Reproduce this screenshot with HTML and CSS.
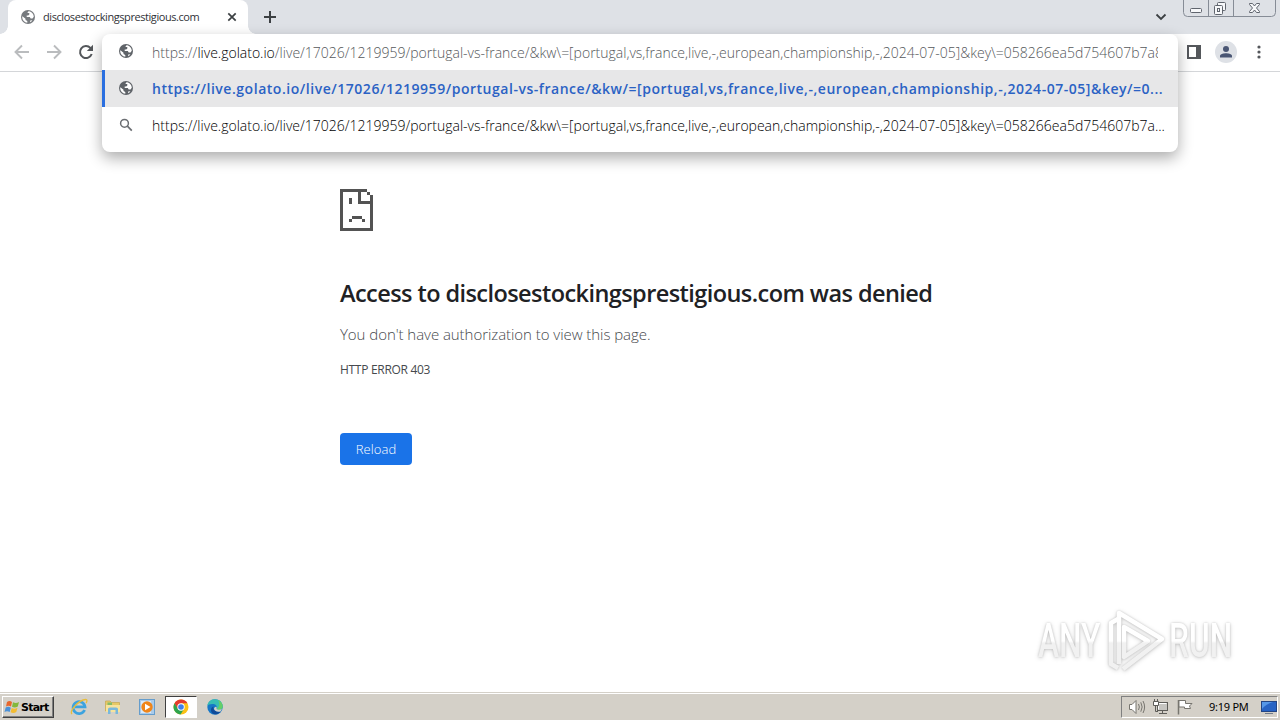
FILE: index.html
```html
<!DOCTYPE html>
<html lang="en">
<head>
    <meta charset="UTF-8">
    <title>disclosestockingsprestigious.com</title>
    <link rel="stylesheet" href="styles.css">
</head>
<body>
    <!-- shared icons -->
    <svg class="defs" width="0" height="0">
        <symbol id="globe" viewBox="0 0 16 16">
            <circle cx="8" cy="8" r="7" fill="#5f6368"/>
            <path d="M2.4 7.2L5.5 9.8V11L7.3 12V13.8C4.5 13.5 2.2 11 2.2 8ZM9.3 2.3C11.8 2.9 13.7 5.1 13.8 7.7L12.5 9.4H10.7L9.8 8.1H6.7V6.5H8.2L9.3 5.4V4.1H7.3L8.5 2.2ZM10.2 11.4L12.4 11.2C11.8 12.1 11 12.8 10.1 13.2Z" fill="#fff"/>
        </symbol>
    </svg>

    <header class="tab-strip">
        <div class="tab">
            <svg class="tab-icon" width="16" height="16"><use href="#globe"/></svg>
            <span class="tab-title">disclosestockingsprestigious.com</span>
            <svg class="tab-close" width="10" height="10" viewBox="0 0 10 10"><path d="M1.3 1.3L8.7 8.7M8.7 1.3L1.3 8.7" stroke="#3c4043" stroke-width="1.7"/></svg>
        </div>
        <svg class="new-tab" width="14" height="14" viewBox="0 0 14 14"><path d="M7 1V13M1 7H13" stroke="#3c4043" stroke-width="2"/></svg>
        <svg class="tab-search" width="12" height="8" viewBox="0 0 12 8"><path d="M1.5 1.5L6 6L10.5 1.5" fill="none" stroke="#3c4043" stroke-width="1.8"/></svg>
        <svg class="window-buttons" width="94" height="17" viewBox="0 0 94 17">
            <path d="M.5 0V12.5Q.5 16.500 4.500 16.500H88.500Q92.500 16.500 92.500 12.500V0M25.500 0V16M50.500 0V16" fill="none" stroke="#868c96"/>
            <g fill="#f7f8fa" stroke="#60656e">
                <rect x="7.500" y="8.500" width="11" height="4" rx="1"/>
                <rect x="34.500" y="2.500" width="8" height="8" rx="1"/>
                <rect x="31.500" y="5.500" width="8" height="9" rx="1"/>
                <rect x="34.500" y="8.500" width="2" height="3"/>
                <path d="M66.500 3.500H69.500L71.500 6L73.500 3.500H76.500V4.500L73.500 8L76.500 11.500V12.500H73.500L71.500 10L69.500 12.500H66.500V11.500L69.500 8L66.500 4.500Z"/>
            </g>
        </svg>
    </header>

    <nav class="toolbar">
        <svg width="16" height="16" viewBox="0 0 16 16"><path d="M15 8H2M8 1.500L1.500 8L8 14.500" fill="none" stroke="#babcbe" stroke-width="1.900"/></svg>
        <svg width="16" height="16" viewBox="0 0 16 16"><path d="M1 8H14M8 1.500L14.500 8L8 14.500" fill="none" stroke="#babcbe" stroke-width="1.900"/></svg>
        <svg width="16" height="16" viewBox="0 0 16 16"><path d="M13.700 10A6 6 0 1 1 12.400 3.900L14 5.500" fill="none" stroke="#54575b" stroke-width="2"/><path d="M15 .8V7H8.800Z" fill="#54575b"/></svg>
        <div class="toolbar-right">
            <svg width="14" height="14" viewBox="0 0 14 14"><path fill-rule="evenodd" d="M0 0H14V14H0ZM2 2V12H9V2Z" fill="#54575b"/></svg>
            <svg width="22" height="22" viewBox="0 0 22 22"><circle cx="11" cy="11" r="11" fill="#dee1e6"/><circle cx="11" cy="8" r="3" fill="#4a5674"/><path d="M5 16.500V15C5 13 8.500 12.200 11 12.200S17 13 17 15V16.500Z" fill="#4a5674"/></svg>
            <svg width="4" height="14" viewBox="0 0 4 14"><g fill="#54575b"><circle cx="2" cy="2" r="1.600"/><circle cx="2" cy="7" r="1.600"/><circle cx="2" cy="12" r="1.600"/></g></svg>
        </div>
    </nav>

    <div class="omnibox">
        <div class="row input">
            <svg width="16" height="16"><use href="#globe"/></svg>
            <span class="url">https://<b>live.golato.io</b>/live/17026/1219959/portugal-vs-france/&amp;kw\=[portugal,vs,france,live,-,european,championship,-,2024-07-05]&amp;key\=058266ea5d754607b7a8</span>
        </div>
        <div class="row selected">
            <svg width="16" height="16"><use href="#globe"/></svg>
            <span class="url">https://live.golato.io/live/17026/1219959/portugal-vs-france/&amp;kw/=[portugal,vs,france,live,-,european,championship,-,2024-07-05]&amp;key/=0...</span>
        </div>
        <div class="row search">
            <svg width="16" height="16" viewBox="0 0 16 16"><circle cx="6.500" cy="6.300" r="3.900" fill="none" stroke="#6b6e72" stroke-width="1.500"/><path d="M9.400 9.200L13.800 13.600" stroke="#6b6e72" stroke-width="1.700"/></svg>
            <span class="url">https://live.golato.io/live/17026/1219959/portugal-vs-france/&amp;kw\=[portugal,vs,france,live,-,european,championship,-,2024-07-05]&amp;key\=058266ea5d754607b7a...</span>
        </div>
    </div>

    <main class="error-page">
        <svg width="33" height="42" viewBox="0 0 33 42" shape-rendering="crispEdges"><path fill="#535353" fill-rule="evenodd" d="M0 0H27V3H30V6H33V42H0ZM3 3V39H30V15H18V3ZM21 3V12H30V9H30V6H27V3ZM9 9H12V15H9ZM12 27H22V30H12ZM9 30H12V33H9ZM22 30H25V33H22Z"/></svg>
        <h1>Access to disclosestockingsprestigious.com was denied</h1>
        <p class="message">You don't have authorization to view this page.</p>
        <p class="code">HTTP ERROR 403</p>
        <button class="reload">Reload</button>
    </main>

    <div class="watermark">
        <span class="any">ANY</span>
        <svg width="60" height="68" viewBox="0 0 60 68">
            <g fill="none" stroke="url(#fade)" stroke-width="4.500" stroke-linejoin="round">
                <path d="M12 12L5 16V57L12 61"/>
                <path d="M13 57V6L56 32L17 62"/>
                <path d="M18 20L42 34L18 50Z"/>
            </g>
            <linearGradient id="fade" gradientUnits="userSpaceOnUse" x1="0" y1="0" x2="0" y2="68">
                <stop offset=".5" stop-color="#fff"/>
                <stop offset=".53" stop-color="#f1f1f1"/>
            </linearGradient>
        </svg>
        <span class="run">RUN</span>
    </div>

    <footer class="taskbar">
        <div class="start">
            <svg width="16" height="16" viewBox="0 0 16 16">
                <path d="M3 3Q5.500 1 8 3L7 7.500Q4.500 6 2 7.500Z" fill="#e8672c"/>
                <path d="M9 3.300Q12 5 15 3L13.800 7.500Q11 9.300 8 7.800Z" fill="#83b83c"/>
                <path d="M1.700 8.600Q4.300 7 6.800 8.700L5.700 13Q3 11.500 .5 13Z" fill="#4b91d8"/>
                <path d="M7.700 9Q10.500 10.500 13.500 8.700L12.300 13Q9.500 15 6.600 13.300Z" fill="#f3bc32"/>
            </svg>
            <span>Start</span>
        </div>
        <div class="apps">
            <div class="app">
                <svg width="18" height="18" viewBox="0 0 18 18">
                    <path d="M14.600 12A6 6 0 1 1 15 8.800H5" fill="none" stroke="#3ca3df" stroke-width="2.700"/>
                    <path d="M2 16C-1 13 9 2 15.500 1.500C18 1.500 16.500 4.500 16 5" fill="none" stroke="#e8bd3a" stroke-width="1.300"/>
                </svg>
            </div>
            <div class="app">
                <svg width="18" height="18" viewBox="0 0 18 18">
                    <path d="M1.500 3H6L7.500 4.500H15.500V13H1.500Z" fill="#e7c966" stroke="#c6a650" stroke-width=".7"/>
                    <path d="M3.500 4.500H8V7H3.500Z" fill="#83bb68"/>
                    <path d="M2 7H16V14H2Z" fill="#f7e39c"/>
                    <path d="M4 16V11Q4 9.500 6 9.500H12Q14 9.500 14 11V16H11.500V12H6.500V16Z" fill="#79b8dc"/>
                </svg>
            </div>
            <div class="app">
                <svg width="18" height="18" viewBox="0 0 18 18">
                    <rect x="1.500" y="1.500" width="15" height="15" fill="#a9cbea" stroke="#659dcc"/>
                    <rect x="3" y="3" width="10" height="12" fill="#d8eafa"/>
                    <circle cx="9" cy="9" r="5.700" fill="#ef8519"/>
                    <path d="M7 5.700V12.300L12.500 9Z" fill="#fff"/>
                </svg>
            </div>
            <div class="app active">
                <svg width="16" height="16" viewBox="0 0 16 16">
                    <circle cx="8" cy="8" r="7.500" fill="#fbc116"/>
                    <path d="M8 8L4.500 10L1.500 4.200A7.500 7.500 0 0 1 14.500 4.200H8Z" fill="#e33b2e"/>
                    <path d="M1.500 4.200A7.500 7.500 0 0 0 7.500 15.500L11 10L8 8L5 10Z" fill="#2da44e"/>
                    <circle cx="8" cy="8" r="3.700" fill="#fff"/>
                    <circle cx="8" cy="8" r="2.800" fill="#3e7fea"/>
                </svg>
            </div>
            <div class="app">
                <svg width="18" height="18" viewBox="0 0 18 18">
                    <circle cx="9" cy="9" r="7.700" fill="#1677c7"/>
                    <path d="M1.300 8C2 3 5.500 1.300 9 1.300C14 1.300 17 5 16.700 8.700C16.300 12 12 12.500 10.500 11C12 9.500 10.500 6.500 7.500 6C4.500 5.700 2 6.500 1.300 8Z" fill="#37bdb4"/>
                    <path d="M12 2C15 3.500 17 6 16.700 8.700C16.300 12 12 12.500 10.500 11C13 10 14.500 6 12 2Z" fill="#65cf68"/>
                    <path d="M7.500 8.500C6.500 12 10 14.500 14.700 13.500C12 17.500 5 17.500 5 12C5 10 6 9 7.500 8.500Z" fill="#104b99"/>
                    <path d="M10.500 11Q12.500 12.600 16 11L14.500 13.600C11 14.500 8 12.700 8 10.500Q8.500 8.500 10.300 8.700Q11.200 10 10.500 11Z" fill="#d4d0c8"/>
                </svg>
            </div>
        </div>
        <div class="tray">
            <svg width="18" height="16" viewBox="0 0 18 16"><path d="M1.500 5.500H4L8 1.500V14.500L4 10.500H1.500Z" fill="#fff" stroke="#77756f"/><path d="M10.500 5Q12.200 8 10.500 11M12.800 3.300Q15.500 8 12.800 12.700M15 2Q18.200 8 15 14" fill="none" stroke="#77756f"/></svg>
            <svg width="18" height="16" viewBox="0 0 18 16"><rect x="5.500" y="3.500" width="10" height="8" fill="#c6c5c1" stroke="#5e5d59"/><path d="M6.500 10.500V4.500H14.500" fill="none" stroke="#fff"/><path d="M7 14.500H15M10.500 12V14M3.500 6V12.500H6" fill="none" stroke="#5e5d59"/><path d="M1.500 2.500H6.500V6.500H1.500ZM2.500 0V2M5.500 0V2" fill="#fff" stroke="#5e5d59"/></svg>
            <svg width="18" height="16" viewBox="0 0 18 16"><path d="M2.500 1V15.500" stroke="#77756f" stroke-width="1.500"/><path d="M3 1.500H9.500V4.500H16L13.500 7L14.500 9.500H8.500V8H3Z" fill="#fff" stroke="#77756f"/></svg>
            <span class="clock">9:19 PM</span>
            <svg class="desktop" width="16" height="16" viewBox="0 0 16 16"><rect x=".5" y="2.500" width="15" height="10" fill="#2763c4" stroke="#234584"/><path d="M1 3H12Q5 5 1 10Z" fill="#5597e8"/><path d="M4 14.500H12" stroke="#717b8a"/></svg>
        </div>
    </footer>
</body>
</html>
```
FILE: styles.css
```css
* {
    box-sizing: border-box;
}
body {
    margin: 0;
    width: 1280px;
    height: 720px;
    overflow: hidden;
    display: flex;
    flex-direction: column;
    position: relative;
    background: #fff;
    font-family: "Open Sans", "Noto Sans", sans-serif;
}
svg {
    display: block;
    flex: none;
}
.defs {
    position: absolute;
}
.tab-strip {
    height: 34px;
    flex: none;
    display: flex;
    align-items: center;
    background: #dee1e6;
    padding-left: 8px;
}
.tab {
    position: relative;
    width: 240px;
    height: 34px;
    display: flex;
    align-items: center;
    padding: 0 11px 0 12px;
    background: #fff;
    border-radius: 8px 8px 0 0;
}
.tab::before,
.tab::after {
    content: "";
    position: absolute;
    bottom: 0;
    width: 8px;
    height: 8px;
}
.tab::before {
    left: -8px;
    background: radial-gradient(circle at 0 0, #dee1e6 7.5px, #fff 8px);
}
.tab::after {
    right: -8px;
    background: radial-gradient(circle at 100% 0, #dee1e6 7.5px, #fff 8px);
}
.tab-icon {
    opacity: 0.85;
}
.tab-title {
    margin: -2px 0 0 7px;
    flex: 1;
    font-size: 11px;
    letter-spacing: -0.43px;
    white-space: nowrap;
    color: #303236;
}
.new-tab {
    margin-left: 15px;
}
.tab-search {
    margin-left: auto;
}
.window-buttons {
    margin: 0 3px 0 16px;
    align-self: flex-start;
}
.toolbar {
    height: 38px;
    flex: none;
    display: flex;
    align-items: center;
    gap: 16px;
    padding: 0 20px 2px 14px;
    border-bottom: 1px solid #d4d6d9;
}
.toolbar-right {
    margin-left: auto;
    margin-right: -1px;
    display: flex;
    align-items: center;
    gap: 14px;
}
.toolbar-right svg:last-child {
    margin-left: 6px;
}
.omnibox {
    position: absolute;
    left: 102px;
    top: 34px;
    width: 1076px;
    height: 118px;
    overflow: hidden;
    border-radius: 8px;
    background: #fff;
    box-shadow: 0 6px 15px rgba(0, 0, 0, 0.33);
}
.row {
    height: 37px;
    display: flex;
    align-items: center;
    padding: 0 12px 0 16px;
}
.row .url {
    margin-left: 18px;
    white-space: nowrap;
    font-size: 14px;
    font-weight: 300;
    color: #000;
}
.row svg {
    margin-top: -2px;
}
.input {
    height: 36px;
}
.row.input .url {
    width: 1006px;
    overflow: hidden;
    color: #55585b;
}
.input b {
    font-weight: 300;
    color: #000;
}
.selected {
    background: #e7e7e8;
    border-left: 3px solid #2a6fe0;
    padding-left: 13px;
}
.row.selected .url {
    font-weight: 600;
    letter-spacing: 0.53px;
    color: #2b62c4;
}
.error-page {
    flex: 1;
    padding: 117px 0 0 340px;
}
.error-page h1 {
    margin: 42px 0 0;
    font-size: 23.5px;
    line-height: 40px;
    font-weight: 600;
    letter-spacing: -0.57px;
    white-space: nowrap;
    color: #202124;
}
.message,
.code {
    margin: 0;
    color: #46494d;
}
.message {
    margin-top: 11px;
    font-size: 15px;
    line-height: 20px;
    font-weight: 300;
    letter-spacing: -0.05px;
}
.code {
    margin-top: 16px;
    font-size: 12px;
    line-height: 20px;
    letter-spacing: -0.3px;
}
.reload {
    display: block;
    width: 72px;
    height: 32px;
    margin-top: 53px;
    padding: 0;
    border: 0;
    border-radius: 4px;
    background: #1a73e8;
    color: #fff;
    font: 300 13px "Open Sans", sans-serif;
    letter-spacing: 0.1px;
}
.watermark {
    position: absolute;
    left: 1038px;
    top: 606px;
    width: 196px;
    height: 70px;
    display: flex;
    align-items: center;
    gap: 6px;
    filter: drop-shadow(0 0 1px rgba(0, 0, 0, 0.16)) drop-shadow(0 1px 2px rgba(0, 0, 0, 0.18));
}
.watermark span {
    width: 62px;
    font: 500 48px/68px "Roboto", sans-serif;
    background: linear-gradient(#fff 50%, #f1f1f1 53%);
    -webkit-background-clip: text;
    background-clip: text;
    color: transparent;
    white-space: nowrap;
    transform: scaleX(0.66);
    transform-origin: left;
}
.watermark .any,
.watermark .run {
    width: 96px;
    margin-right: -34px;
}
.watermark .run {
    margin-left: -3px;
}
.taskbar {
    height: 28px;
    flex: none;
    display: flex;
    align-items: center;
    padding: 2px 2px 0;
    background: #d4d0c8;
    box-shadow: inset 0 1px #d4d0c8, inset 0 2px #fff;
}
.start {
    width: 52px;
    height: 22px;
    display: flex;
    align-items: center;
    gap: 1px;
    padding-left: 1px;
    border: 1px solid;
    border-color: #fff #404040 #404040 #fff;
    box-shadow: inset -1px -1px #808080;
    font: bold 11px "DejaVu Sans", sans-serif;
    letter-spacing: -0.75px;
    color: #000;
}
.apps {
    margin-left: 9px;
    display: flex;
    gap: 2px;
}
.app {
    width: 32px;
    height: 22px;
    display: flex;
    align-items: center;
    justify-content: center;
}
.active {
    background: #fff;
    border: 1px solid;
    border-color: #404040 #fff #fff #404040;
}
.tray {
    width: 157px;
    height: 22px;
    margin-left: auto;
    display: flex;
    align-items: center;
    gap: 6px;
    padding-left: 6px;
    border: 1px solid;
    border-color: #808080 #fff #fff #808080;
}
.clock {
    margin: -2px 0 0 9px;
    font: 11px "Noto Sans", sans-serif;
    letter-spacing: -0.25px;
    white-space: nowrap;
    color: #000;
}
.desktop {
    margin-left: auto;
}
```
